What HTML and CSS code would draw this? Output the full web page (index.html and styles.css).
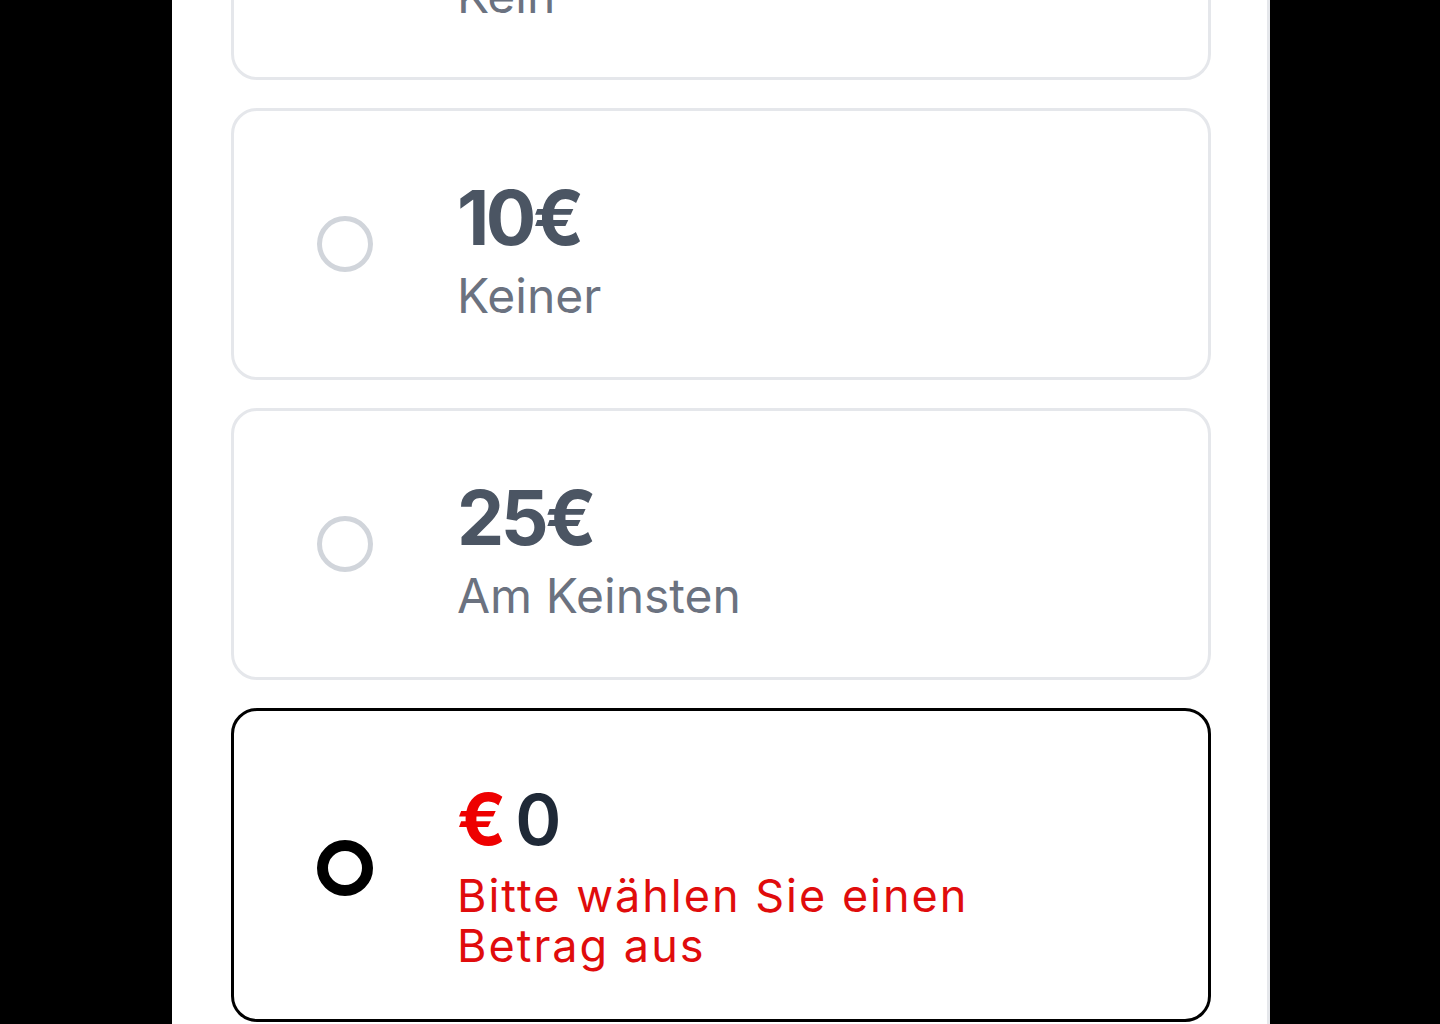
FILE: index.html
```html
<!DOCTYPE html>
<html lang="de">
<head>
<meta charset="utf-8">
<title>Betrag auswählen</title>
<link rel="stylesheet" href="styles.css">
</head>
<body>
<main class="page">
  <div class="options">
    <label class="option">
      <span class="radio"></span>
      <span class="text">
        <span class="price">5€</span>
        <span class="note">Kein</span>
      </span>
    </label>
    <label class="option">
      <span class="radio"></span>
      <span class="text">
        <span class="price">10€</span>
        <span class="note">Keiner</span>
      </span>
    </label>
    <label class="option">
      <span class="radio"></span>
      <span class="text">
        <span class="price">25€</span>
        <span class="note">Am Keinsten</span>
      </span>
    </label>
    <label class="option option-active">
      <span class="radio radio-checked"></span>
      <span class="text">
        <span class="price price-custom"><span class="currency">€</span><span class="amount">0</span></span>
        <span class="error">Bitte wählen Sie einen<br>Betrag aus</span>
      </span>
    </label>
  </div>
</main>
</body>
</html>
```

FILE: styles.css
```css
html, body {
  margin: 0;
  padding: 0;
}

body {
  background: #000;
  height: 1024px;
  overflow: hidden;
  font-family: Inter, "Noto Sans", "Liberation Sans", sans-serif;
}

.page {
  box-sizing: border-box;
  width: 1098px;
  height: 1024px;
  margin-left: 172px;
  background: #fff;
  border-right: 3px solid #e5e7eb;
  padding: 0 56px 0 59px;
  overflow: hidden;
}

.options {
  display: flex;
  flex-direction: column;
  gap: 28px;
  margin-top: -192px;
}

.option {
  box-sizing: border-box;
  display: flex;
  align-items: stretch;
  width: 980px;
  height: 272px;
  border: 3px solid #e5e7eb;
  border-radius: 26px;
  background: #fff;
}

.option-active {
  height: 314px;
  border-color: #000;
}

.radio {
  align-self: center;
  box-sizing: border-box;
  flex: none;
  width: 56px;
  height: 56px;
  margin-left: 83px;
  margin-right: 84px;
  border: 5px solid #d1d5db;
  border-radius: 50%;
}

.radio-checked {
  border: 11px solid #000;
  margin-top: 6px;
}

.text {
  display: flex;
  flex-direction: column;
  padding-top: 65px;
}

.price {
  font-size: 75px;
  line-height: 84px;
  font-weight: 700;
  color: #4b5563;
  letter-spacing: -3.5px;
}

.price-custom {
  display: flex;
  align-items: baseline;
  letter-spacing: 0;
  padding-top: 1px;
}

.currency {
  color: #ee0000;
  font-weight: 700;
  font-size: 72px;
}

.amount {
  margin-left: 9px;
  font-size: 70px;
  font-weight: 600;
  color: #1f2937;
}

.note {
  font-size: 48px;
  line-height: 72px;
  font-weight: 400;
  color: #6b7280;
}

.error {
  margin-top: 9px;
  font-size: 45px;
  line-height: 50px;
  font-weight: 400;
  letter-spacing: 2px;
  color: #e00c0c;
}
```
